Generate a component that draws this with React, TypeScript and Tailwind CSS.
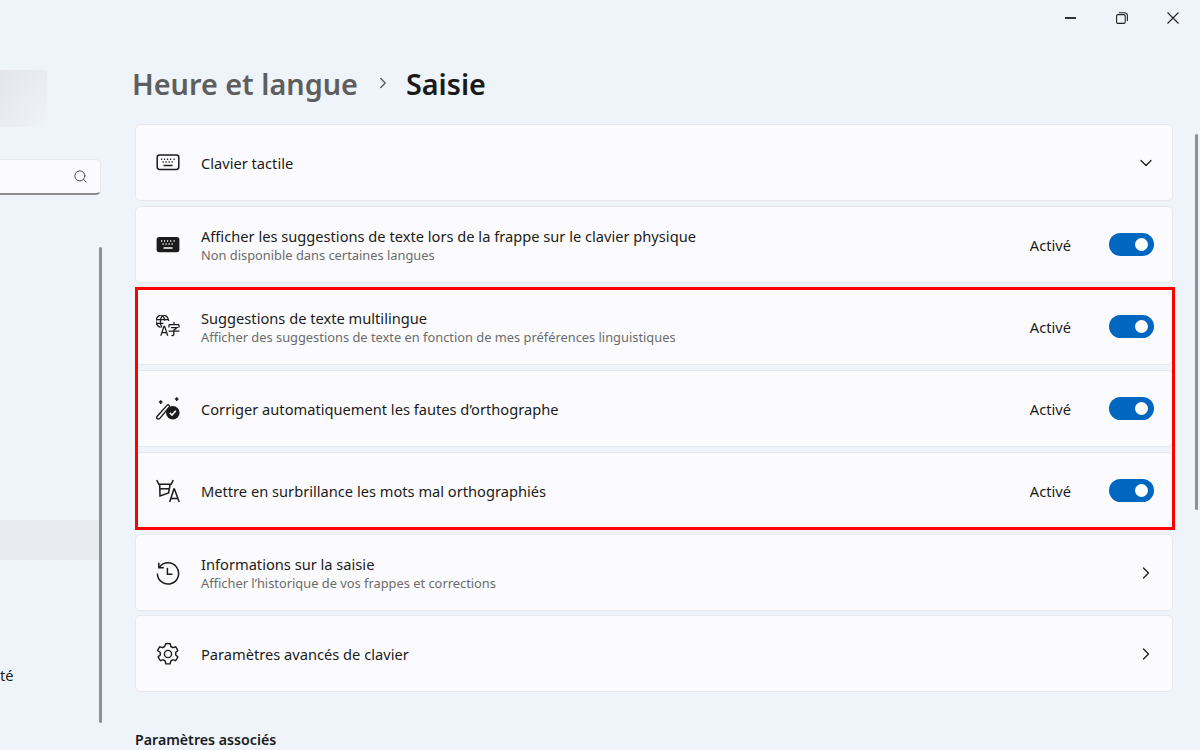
import {ChevronDown, ChevronRight, Search} from 'lucide-react'
import type {ReactNode} from 'react'

const FONT = "[font-family:'Noto_Sans',sans-serif]"

function KeyboardOutline() {
    return (
        <svg width="24" height="24" viewBox="0 0 24 24" fill="none" stroke="#1b1b1b" strokeWidth="1.5">
            <rect x="1.2" y="4" width="21.6" height="14.4" rx="2.4" />
            <path d="M5 8.2h1.2M8 8.2h1.2M11 8.2h1.2M14 8.2h1.2M17.5 8.2h1.2M6.5 11h1.2M9.5 11h1.2M12.5 11h1.2M15.5 11h1.2M7.5 14.6h9" />
        </svg>
    )
}

function KeyboardFilled() {
    return (
        <svg width="24" height="24" viewBox="0 0 24 24" fill="none">
            <rect x="0.6" y="4" width="22.8" height="15.2" rx="2.6" fill="#1b1b1b" />
            <path d="M5 8h1.2M8 8h1.2M11 8h1.2M14 8h1.2M17.5 8h1.2M6.5 11h1.2M9.5 11h1.2M12.5 11h1.2M15.5 11h1.2M7.5 15h9" stroke="#fff" strokeWidth="1.4" />
        </svg>
    )
}

function LanguageIcon() {
    return (
        <svg width="24" height="24" viewBox="0 0 24 24" fill="none" stroke="#1b1b1b" strokeWidth="1.25">
            <path d="M4.6 12.4A6.4 6.4 0 1 1 12.7 6" />
            <path d="M.3 4.5h12M.3 8.4h7" />
            <path d="M6.4.4c-2.6 3.4-2.6 8.6-.4 12M6.4.4c1.4 1.6 2.2 3.2 2.5 5.2" />
            <path d="M4.8 20.8l3.2-9.4h.6l3.2 9.4M6 17.6h5" />
            <path d="M13 9.6h10M18 7v2.6M13 12.6v-3M23 12.6v-3M15 12.6h6l-3.2 2.6v4.2c0 1-.7 1.3-2.4 1.1M12.6 16h10.800" />
        </svg>
    )
}

function WandCheckIcon() {
    return (
        <svg width="24" height="24" viewBox="0 0 24 24" fill="none" stroke="#1b1b1b" strokeWidth="1.4">
            <path d="M1.200 19.200 11 8.400a1.400 1.400 0 0 1 2.200 1.800L3.600 21.600a1.600 1.600 0 0 1-2.400-2.400Z" />
            <path d="M4.700 3.300v3.600M2.900 5.100h3.600M20.700.3v3.600M18.900 2.100h3.600" strokeWidth="1.5" />
            <circle cx="16.800" cy="15.700" r="6.800" fill="#1b1b1b" stroke="none" />
            <path d="m13.800 15.900 2.200 2.200 3.800-4.400" stroke="#fff" strokeWidth="1.5" />
        </svg>
    )
}

function HighlightIcon() {
    return (
        <svg width="24" height="24" viewBox="0 0 24 24" fill="none" stroke="#1b1b1b" strokeWidth="1.5">
            <path d="M.7 1 2.800 5.200h12.400L17.300 1" />
            <path d="M3.700 5.200 4 17l8.600-3 1.600-8.800" />
            <path d="M4 9.800h9.400" />
            <path d="m13.700 23 4.200-13h.5l4.800 13M15 19.400h7.400" />
        </svg>
    )
}

function HistoryIcon() {
    return (
        <svg width="24" height="24" viewBox="0 0 24 24" fill="none" stroke="#1b1b1b" strokeWidth="1.5">
            <path d="M3.400 6.200A10.600 10.600 0 1 1 1.400 12.400" />
            <path d="M2.800 1.800v5h5" />
            <path d="M11.400 6.800v6.400h5" />
        </svg>
    )
}

function GearIcon() {
    return (
        <svg width="24" height="24" viewBox="0 0 24 24" fill="none" stroke="#1b1b1b" strokeWidth="1.4">
            <path d="M9.800 1.700a11 11 0 0 1 4.400 0l.6 2.800a8 8 0 0 1 2 1.200l2.800-.9a11 11 0 0 1 2.200 3.800l-2.100 1.900a8 8 0 0 1 0 2.400l2.100 1.900a11 11 0 0 1-2.200 3.800l-2.800-.9a8 8 0 0 1-2 1.200l-.6 2.800a11 11 0 0 1-4.400 0l-.6-2.800a8 8 0 0 1-2-1.200l-2.800.9a11 11 0 0 1-2.200-3.800l2.100-1.900a8 8 0 0 1 0-2.400L1.600 8.600a11 11 0 0 1 2.200-3.800l2.800.9a8 8 0 0 1 2-1.200Z" />
            <circle cx="12" cy="12" r="3.600" />
        </svg>
    )
}

function Toggle() {
    return (
        <div className="flex h-[23px] w-[45px] items-center justify-end rounded-full bg-[#0067c0] pr-[6px]">
            <div className="h-[13px] w-[13px] rounded-full bg-white" />
        </div>
    )
}

type CardProps = Readonly<{
    icon: ReactNode
    title: string
    subtitle?: string
    right: ReactNode
}>

function Card({icon, title, subtitle, right}: CardProps) {
    return (
        <div className="flex h-[77px] items-center rounded-[5px] border border-[#e6e8ee] bg-[#fbfbfd] pl-[20px] pr-[18px]">
            <div className="flex w-[24px] shrink-0 justify-center">{icon}</div>
            <div className="ml-[21px] mt-[2px] flex min-w-0 flex-col">
                <span className="text-[14.65px] leading-[19px] text-[#1b1b1b]">{title}</span>
                {subtitle && <span className="mt-[1px] text-[12.85px] leading-[17px] text-[#6b6b6b]">{subtitle}</span>}
            </div>
            <div className="ml-auto flex items-center">{right}</div>
        </div>
    )
}

function ActiveToggle() {
    return (
        <div className="flex items-center gap-[38px]">
            <span className="mt-[2px] text-[14.65px] text-[#1b1b1b]">Activé</span>
            <Toggle />
        </div>
    )
}

function Chevron() {
    return <ChevronRight size={20} strokeWidth={1.5} color="#1b1b1b" className="mr-[-2px]" />
}

function Sidebar() {
    return (
        <aside className="relative h-[750px] w-[135px] shrink-0 overflow-hidden">
            <div className="mt-[70px] h-[57px] w-[47px] bg-gradient-to-br from-[#e3e5ea] to-[#eff3fa]" />
            <div className="mt-[32px] flex h-[36px] w-[101px] items-center justify-end rounded-r-[5px] border-b-2 border-r border-t border-b-[#8a8a8e] border-r-[#e6e8ee] border-t-[#e6e8ee] bg-[#fbfbfd] pr-[12px]">
                <Search size={15} strokeWidth={1.5} color="#444" />
            </div>
            <div className="mt-[325px] h-[40px] w-[100px] bg-[#e9ebf2]" />
            <div className="mt-[105px] text-[14.65px] leading-[20px] text-[#1b1b1b]">
                <span className="block w-[15px] overflow-hidden">té</span>
            </div>
            <div className="absolute left-[99px] top-[247px] h-[476px] w-[3px] rounded-full bg-[#8e9094]" />
        </aside>
    )
}

function TitleBar() {
    return (
        <div className="absolute right-[2px] top-0 flex items-center text-[#1b1b1b]">
            <div className="flex h-[36px] w-[51px] items-center justify-center">
                <div className="h-[1.5px] w-[11px] bg-[#333]" />
            </div>
            <div className="flex h-[36px] w-[51px] items-center justify-center">
                <svg width="12" height="12" viewBox="0 0 12 12" fill="none" stroke="#222" strokeWidth="1.1">
                    <rect x="0.6" y="2.6" width="8.6" height="8.8" rx="1.4" />
                    <path d="M2.800 .7h5.600a3 3 0 0 1 3 3v5.400" />
                </svg>
            </div>
            <div className="flex h-[36px] w-[51px] items-center justify-center">
                <svg width="12" height="12" viewBox="0 0 12 12" fill="none" stroke="#222" strokeWidth="1.1">
                    <path d="M.5.5l11 11M11.500.5l-11 11" />
                </svg>
            </div>
        </div>
    )
}

export default function App() {
    return (
        <div className={`relative flex h-[750px] w-[1200px] overflow-hidden bg-[#eff4fb] ${FONT}`}>
            <Sidebar />
            <main className="w-[1038px] shrink-0">
                <div className="ml-[-3px] flex h-[124px] items-start pt-[62px]">
                    <span className="text-[28.8px] font-semibold leading-[44px] text-[#5e5e5e]">Heure et langue</span>
                    <ChevronRight size={18} strokeWidth={1.6} color="#555" className="ml-[16px] mt-[12px]" />
                    <span className="ml-[14px] text-[28.8px] font-semibold leading-[44px] text-[#1a1a1a]">Saisie</span>
                </div>
                <div className="flex flex-col gap-[5px]">
                    <Card
                        icon={<KeyboardOutline />}
                        title="Clavier tactile"
                        right={<ChevronDown size={20} strokeWidth={1.5} color="#1b1b1b" className="mr-[-2px]" />}
                    />
                    <Card
                        icon={<KeyboardFilled />}
                        title="Afficher les suggestions de texte lors de la frappe sur le clavier physique"
                        subtitle="Non disponible dans certaines langues"
                        right={<ActiveToggle />}
                    />
                    <div className="relative flex flex-col gap-[5px]">
                        <Card
                            icon={<LanguageIcon />}
                            title="Suggestions de texte multilingue"
                            subtitle="Afficher des suggestions de texte en fonction de mes préférences linguistiques"
                            right={<ActiveToggle />}
                        />
                        <Card
                            icon={<WandCheckIcon />}
                            title="Corriger automatiquement les fautes d’orthographe"
                            right={<ActiveToggle />}
                        />
                        <Card
                            icon={<HighlightIcon />}
                            title="Mettre en surbrillance les mots mal orthographiés"
                            right={<ActiveToggle />}
                        />
                        <div className="pointer-events-none absolute -bottom-[1px] -top-[1px] left-0 right-[-2px] border-[3px] border-[#ff0000]" />
                    </div>
                    <Card
                        icon={<HistoryIcon />}
                        title="Informations sur la saisie"
                        subtitle="Afficher l’historique de vos frappes et corrections"
                        right={<Chevron />}
                    />
                    <div className="-mt-[1px]">
                        <Card icon={<GearIcon />} title="Paramètres avancés de clavier" right={<Chevron />} />
                    </div>
                </div>
                <h2 className="mt-[38px] text-[14.2px] font-semibold leading-[20px] text-[#1b1b1b]">Paramètres associés</h2>
            </main>
            <TitleBar />
            <div className="absolute left-[1195px] top-[134px] h-[376px] w-[3px] rounded-full bg-[#8e9094]" />
        </div>
    )
}
